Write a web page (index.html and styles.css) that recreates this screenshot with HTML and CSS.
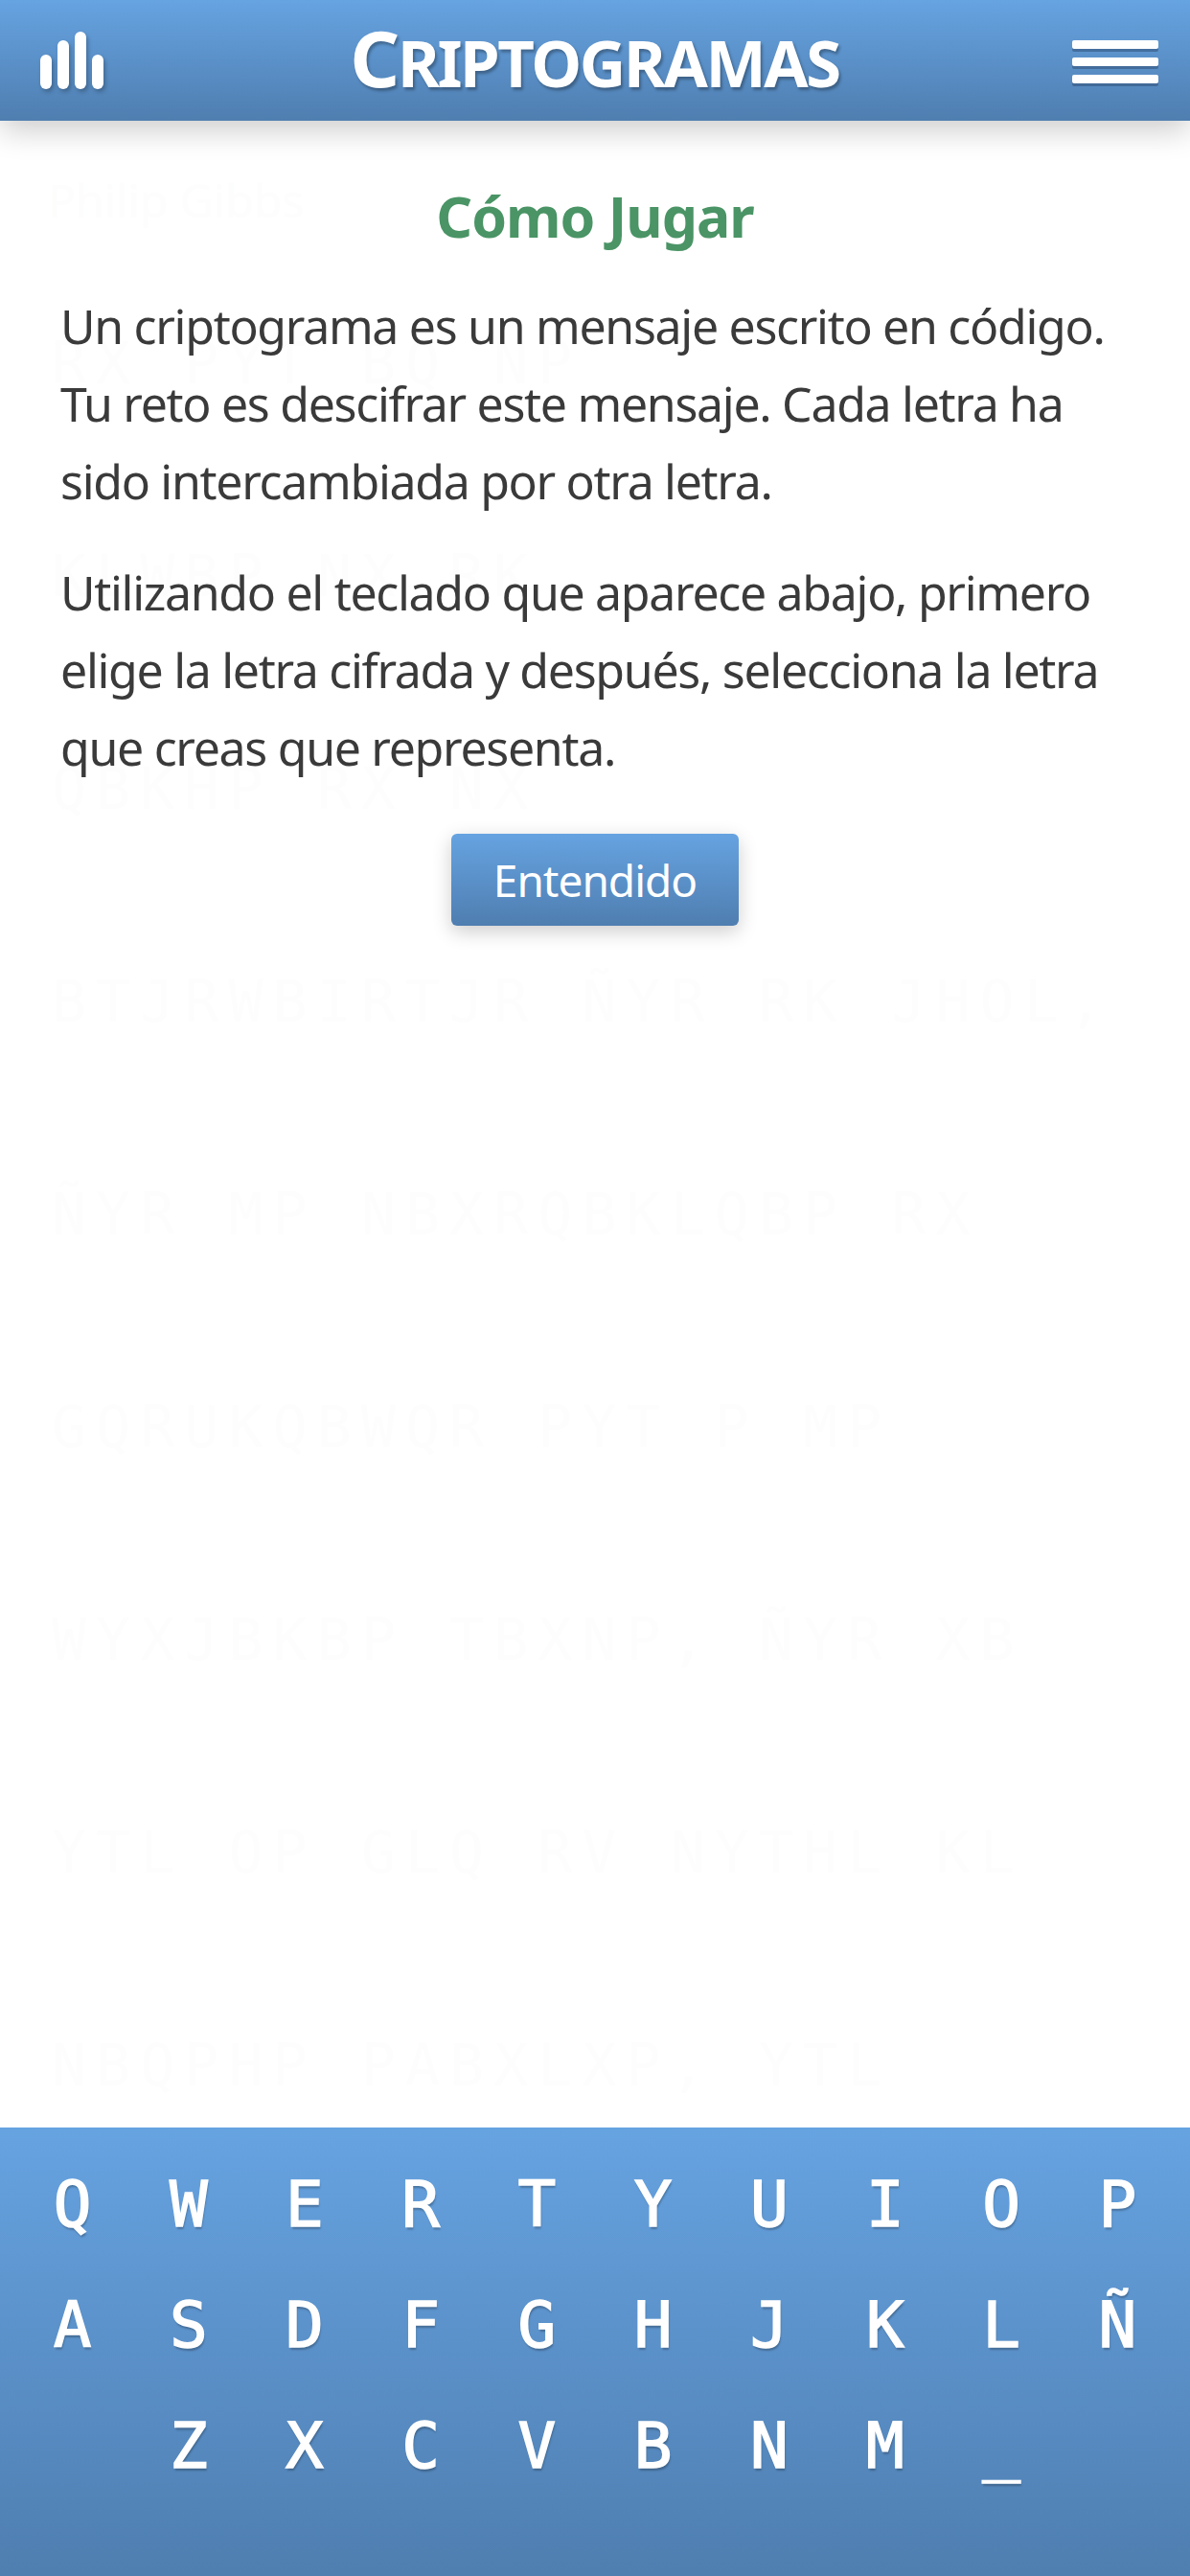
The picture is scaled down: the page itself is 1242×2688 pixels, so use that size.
FILE: index.html
```html
<!DOCTYPE html>
<html lang="es">
<head>
<meta charset="utf-8">
<title>Criptogramas</title>
<link rel="stylesheet" href="styles.css">
</head>
<body>
<header class="topbar">
  <svg class="stats-icon" width="66" height="60" viewBox="0 0 66 60" aria-hidden="true">
    <rect x="0" y="24" width="12" height="36" rx="6"/>
    <rect x="18" y="9" width="12" height="51" rx="6"/>
    <rect x="36" y="0" width="12" height="60" rx="6"/>
    <rect x="54" y="24" width="12" height="36" rx="6"/>
  </svg>
  <h1 class="title">Criptogramas</h1>
  <div class="menu-icon" aria-hidden="true"><span></span><span></span><span></span></div>
</header>
<main class="stage">
  <div class="puzzle" aria-hidden="true">
    <div class="author">Philip Gibbs</div>
    <div class="cipher">
      <div>RX PYT BQ NP</div>
      <div>KLWBP NX RK</div>
      <div>QBKHP RX NX</div>
      <div>BTJRWBIRTJR ÑYR RK JHOL,</div>
      <div>ÑYR MP NBXRQBKLQBP RX</div>
      <div>GQRUKQBWQR PYT P MP</div>
      <div>WYXJBKBP TBXNP, ÑYR XB</div>
      <div>YTL OP GLQ RV NYTHL KL</div>
      <div>NBQPHP PABXLXP, YTL</div>
    </div>
  </div>
  <section class="help">
    <h2 class="help-title">Cómo Jugar</h2>
    <p class="help-text">Un criptograma es un mensaje escrito en código. Tu reto es descifrar este mensaje. Cada letra ha sido intercambiada por otra letra.</p>
    <p class="help-text">Utilizando el teclado que aparece abajo, primero elige la letra cifrada y después, selecciona la letra que creas que representa.</p>
    <button class="ok-button" type="button">Entendido</button>
  </section>
</main>
<footer class="keyboard">
  <div class="key">Q</div><div class="key">W</div><div class="key">E</div><div class="key">R</div><div class="key">T</div><div class="key">Y</div><div class="key">U</div><div class="key">I</div><div class="key">O</div><div class="key">P</div>
  <div class="key">A</div><div class="key">S</div><div class="key">D</div><div class="key">F</div><div class="key">G</div><div class="key">H</div><div class="key">J</div><div class="key">K</div><div class="key">L</div><div class="key">Ñ</div>
  <div class="key key-offset">Z</div><div class="key">X</div><div class="key">C</div><div class="key">V</div><div class="key">B</div><div class="key">N</div><div class="key">M</div><div class="key">_</div>
</footer>
</body>
</html>
```
FILE: styles.css
```css
* { box-sizing: border-box; }
html, body { margin: 0; padding: 0; }
body {
  width: 1242px;
  height: 2688px;
  display: flex;
  flex-direction: column;
  background: #fff;
  font-family: "Noto Sans", sans-serif;
  overflow: hidden;
}
.topbar {
  position: relative;
  z-index: 2;
  flex: 0 0 126px;
  display: flex;
  align-items: flex-start;
  justify-content: space-between;
  padding: 33px 33px 0 42px;
  background: linear-gradient(#66a3e1, #4f7eb0);
  box-shadow: 0 10px 30px rgba(0,0,0,.2);
}
.stats-icon { fill: #fff; filter: drop-shadow(2px 3px 2px rgba(0,0,0,.25)); }
.title {
  margin: -25px 0 0 14px;
  font-size: 67px;
  line-height: 104px;
  font-weight: 700;
  color: #fff;
  letter-spacing: -2.4px;
  text-transform: uppercase;
  text-shadow: 2px 3px 3px rgba(0,0,0,.3);
}
.title::first-letter { font-size: 81px; }
.menu-icon {
  width: 90px;
  margin-top: 9px;
  display: flex;
  flex-direction: column;
  gap: 9px;
}
.menu-icon span {
  height: 9px;
  background: #fff;
  border-radius: 2px;
  box-shadow: 0 3px 0 rgba(50,80,120,.55);
}
.stage { position: relative; flex: 1 1 auto; overflow: hidden; }
.puzzle {
  position: absolute;
  inset: 0;
  padding: 50px 0 0 54px;
  color: #fdfdfd;
}
.author { margin-left: -4px; font-size: 48px; line-height: 66px; }
.cipher {
  margin-top: 26px;
  display: flex;
  flex-direction: column;
  font-family: "DejaVu Sans Mono", monospace;
  font-size: 60px;
  line-height: 222px;
  letter-spacing: 10px;
  white-space: nowrap;
}
.cipher div { height: 222px; }
.help {
  position: relative;
  display: flex;
  flex-direction: column;
  align-items: center;
  padding: 59px 63px 0;
}
.help-title {
  margin: 0 0 35px;
  font-size: 59px;
  line-height: 80px;
  font-weight: 700;
  color: #4a9465;
  letter-spacing: -1px;
}
.help-text {
  align-self: flex-start;
  width: calc(100% + 23px);
  margin: 0 0 35px;
  font-size: 50px;
  line-height: 81px;
  color: #3a3a3a;
  letter-spacing: -1.3px;
}
.ok-button {
  width: 300px;
  height: 96px;
  margin-top: 14px;
  border: 0;
  border-radius: 6px;
  background: linear-gradient(#66a3e1, #4f7eb0);
  box-shadow: 0 6px 20px rgba(0,0,0,.2);
  color: #fff;
  font-family: inherit;
  font-size: 46px;
  letter-spacing: -1px;
}
.keyboard {
  flex: 0 0 468px;
  display: grid;
  grid-template-columns: repeat(10, 1fr);
  grid-auto-rows: 126px;
  padding: 17px 15px 0;
  background: linear-gradient(#66a3e1, #4f7eb0);
}
.key {
  display: flex;
  align-items: center;
  justify-content: center;
  font-family: "DejaVu Sans Mono", monospace;
  font-size: 66px;
  font-weight: 400;
  color: #fff;
  -webkit-text-stroke: 1.5px #fff;
  text-shadow: 1px 3px 2px rgba(0,0,0,.25);
}
.key-offset { grid-column-start: 2; }
```
